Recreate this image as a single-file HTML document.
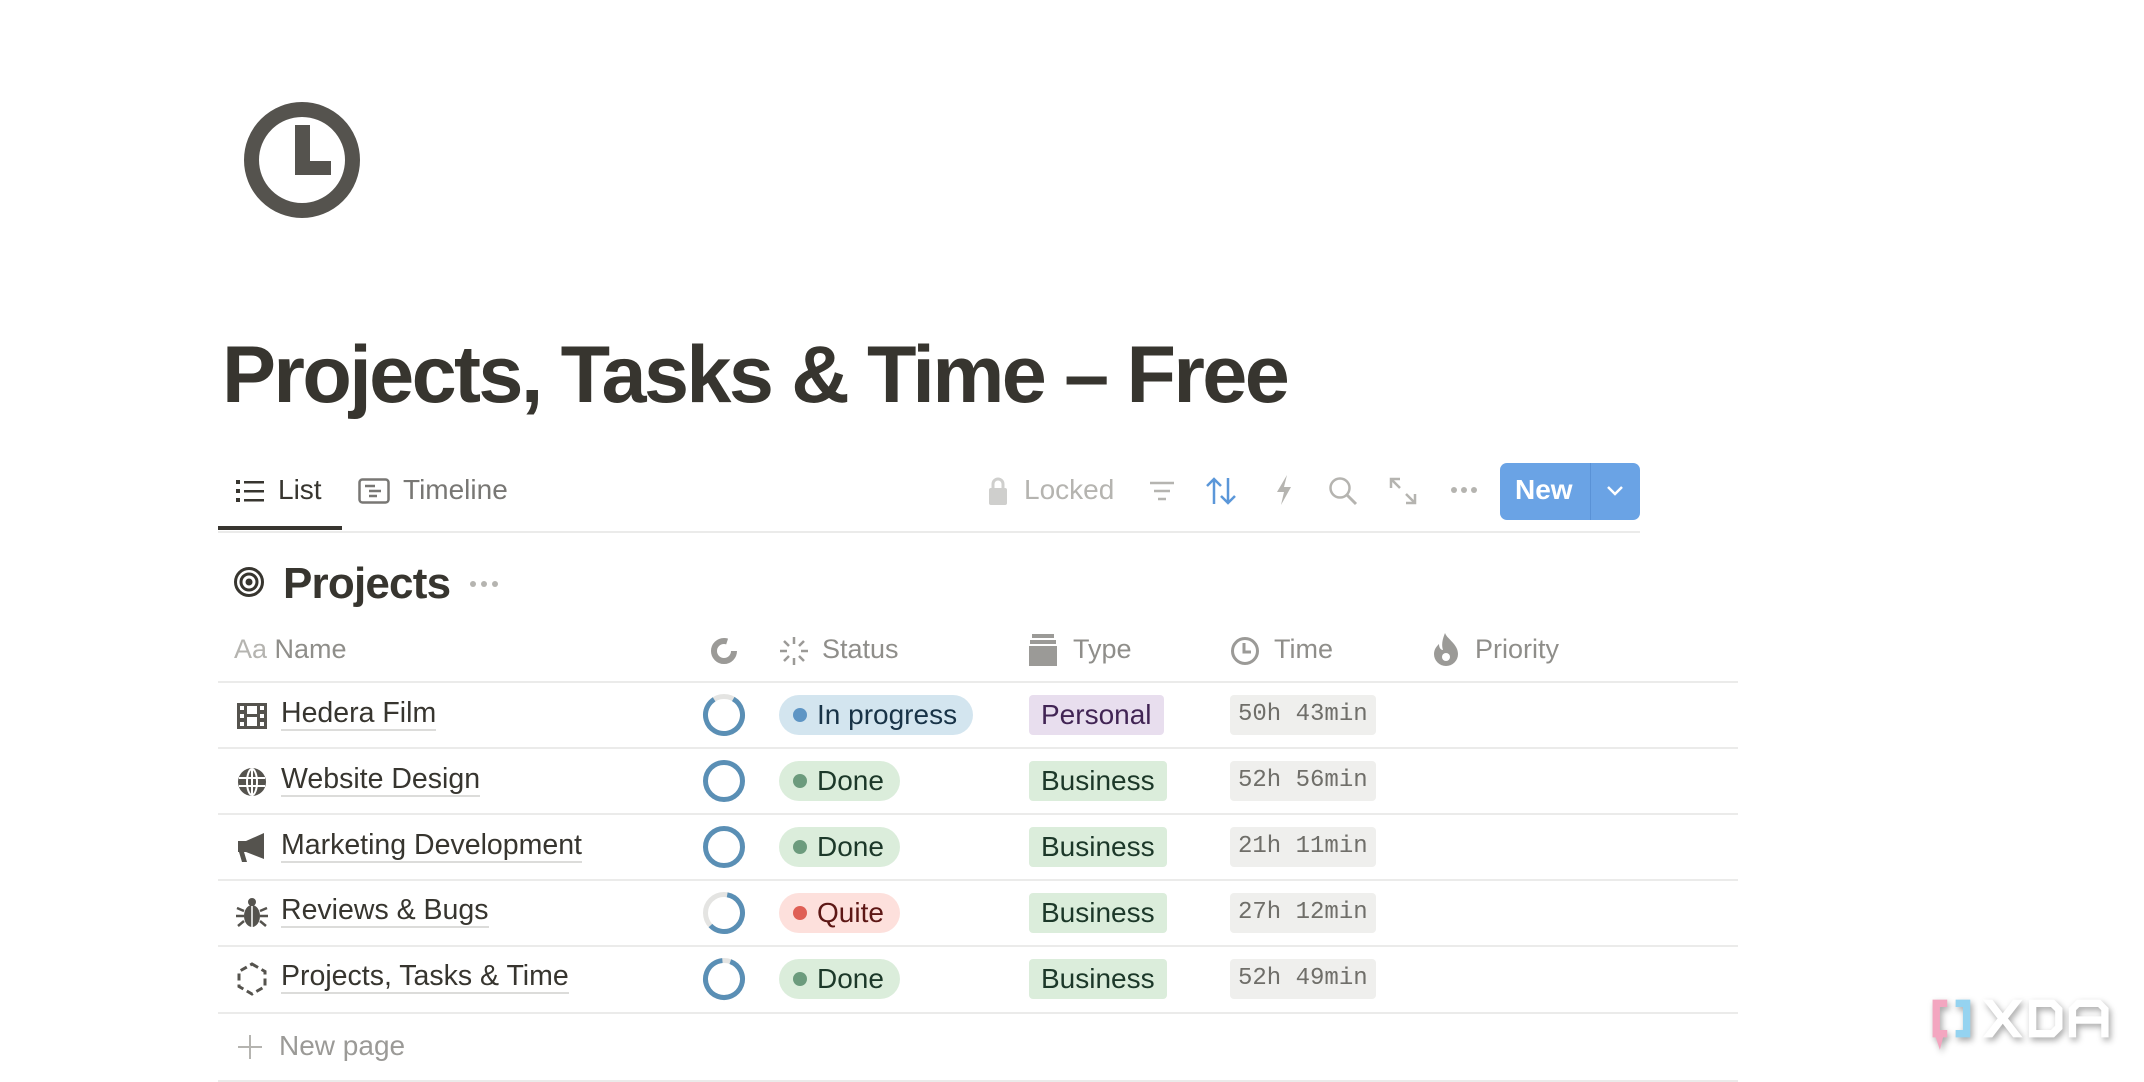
<!DOCTYPE html>
<html><head><meta charset="utf-8"><style>
*{margin:0;padding:0;box-sizing:border-box}
body{width:2144px;height:1082px;background:#fff;position:relative;overflow:hidden;font-family:"Liberation Sans",sans-serif;color:#37352f}
.a{position:absolute}
h1{position:absolute;left:222px;top:329px;font-size:81px;font-weight:700;letter-spacing:-2.6px;color:#37352f;white-space:nowrap}
.tab{font-size:28px;color:#787774;top:474px}
.row-line{position:absolute;left:218px;width:1520px;height:2px;background:#ebebea}
.hdr{font-size:27px;color:#8f8e8a;top:634px}
.name{position:absolute;left:281px;font-size:28.5px;color:#37352f;border-bottom:2px solid #dcdcda;line-height:32px}
.pill{position:absolute;height:40px;border-radius:20px;font-size:28px;line-height:40px;padding:0 16px 0 14px;white-space:nowrap}
.pill i{display:inline-block;width:14px;height:14px;border-radius:7px;margin-right:10px;vertical-align:2px}
.tag{position:absolute;left:1029px;height:40px;border-radius:4px;font-size:28px;line-height:40px;padding:0 12px;background:#dbeddb;color:#1c3829}
.time{position:absolute;left:1230px;height:40px;border-radius:4px;font-family:"Liberation Mono",monospace;font-size:24px;line-height:40px;padding:0 8px;background:#efefed;color:#6f6e69}
.ring{position:absolute;left:702px}
</style></head><body>

<svg class="a" style="left:243px;top:101px" width="120" height="120" viewBox="0 0 120 120">
<circle cx="59" cy="59" r="50.5" fill="none" stroke="#55534e" stroke-width="15"/>
<path d="M52 24h15v36h21v14H52z" fill="#55534e"/>
</svg>

<h1>Projects, Tasks &amp; Time – Free</h1>

<svg class="a" style="left:236px;top:478px" width="28" height="26" viewBox="0 0 28 26"><g fill="#37352f"><rect x="0" y="2" width="4" height="4"/><rect x="0" y="11" width="4" height="4"/><rect x="0" y="20" width="4" height="4"/><rect x="8" y="3" width="20" height="2.5"/><rect x="8" y="12" width="20" height="2.5"/><rect x="8" y="21" width="20" height="2.5"/></g></svg>
<div class="a tab" style="left:278px;color:#37352f">List</div>
<svg class="a" style="left:358px;top:478px" width="32" height="26" viewBox="0 0 32 26"><rect x="1.5" y="1.5" width="29" height="23" rx="3" fill="none" stroke="#787774" stroke-width="2.5"/><path d="M7 8h10M11 13h12M11 18h8" stroke="#787774" stroke-width="2.5"/></svg>
<div class="a tab" style="left:403px">Timeline</div>
<div class="a" style="left:218px;top:526px;width:124px;height:4px;background:#37352f"></div>
<div class="a" style="left:218px;top:531px;width:1422px;height:2px;background:#ebebea"></div>

<svg class="a" style="left:988px;top:476px" width="20" height="30" viewBox="0 0 20 30"><path d="M5 13V8a5 5 0 0 1 10 0v5" fill="none" stroke="#cfcfcd" stroke-width="3"/><rect x="1" y="12" width="18" height="17" rx="2" fill="#cfcfcd"/></svg>
<div class="a" style="left:1024px;top:474px;font-size:28px;color:#b5b4b0">Locked</div>
<svg class="a" style="left:1148px;top:480px" width="28" height="22" viewBox="0 0 28 22"><path d="M2 3h24M6 11h16M10 19h8" stroke="#b5b4b0" stroke-width="2.5"/></svg>
<svg class="a" style="left:1205px;top:476px" width="32" height="30" viewBox="0 0 32 30"><path d="M9 28V3M2 10l7-7 7 7M23 2v25M16 20l7 7 7-7" fill="none" stroke="#5b97d9" stroke-width="2.5"/></svg>
<svg class="a" style="left:1274px;top:474px" width="20" height="32" viewBox="0 0 20 32"><path d="M13 1L3 18h7l-3 13 10-18h-7z" fill="#b5b4b0"/></svg>
<svg class="a" style="left:1328px;top:476px" width="30" height="30" viewBox="0 0 30 30"><circle cx="12" cy="12" r="9.5" fill="none" stroke="#b5b4b0" stroke-width="2.5"/><path d="M19 19l9 9" stroke="#b5b4b0" stroke-width="3"/></svg>
<svg class="a" style="left:1388px;top:476px" width="30" height="30" viewBox="0 0 30 30"><path d="M3 12V3h9M3 3l9 9M27 18v9h-9M27 27l-9-9" fill="none" stroke="#b5b4b0" stroke-width="2.5"/></svg>
<svg class="a" style="left:1450px;top:486px" width="28" height="8" viewBox="0 0 28 8"><circle cx="4" cy="4" r="3" fill="#b5b4b0"/><circle cx="14" cy="4" r="3" fill="#b5b4b0"/><circle cx="24" cy="4" r="3" fill="#b5b4b0"/></svg>
<div class="a" style="left:1500px;top:463px;width:140px;height:57px;background:#6aa3e5;border-radius:7px"></div>
<div class="a" style="left:1590px;top:463px;width:1px;height:57px;background:#5a92d6"></div>
<div class="a" style="left:1515px;top:474px;font-size:28px;font-weight:700;color:#fff">New</div>
<svg class="a" style="left:1606px;top:485px" width="18" height="12" viewBox="0 0 18 12"><path d="M2 2l7 7 7-7" fill="none" stroke="#fff" stroke-width="2.5"/></svg>

<svg class="a" style="left:233px;top:566px" width="32" height="32" viewBox="0 0 32 32"><circle cx="16" cy="16" r="13.5" fill="none" stroke="#37352f" stroke-width="3"/><circle cx="16" cy="16" r="8" fill="none" stroke="#37352f" stroke-width="3"/><circle cx="16" cy="16" r="3.5" fill="#37352f"/></svg>
<div class="a" style="left:283px;top:559px;font-size:44px;font-weight:700;color:#37352f;letter-spacing:-0.8px">Projects</div>
<svg class="a" style="left:469px;top:580px" width="30" height="8" viewBox="0 0 30 8"><circle cx="4" cy="4" r="3" fill="#b5b4b0"/><circle cx="15" cy="4" r="3" fill="#b5b4b0"/><circle cx="26" cy="4" r="3" fill="#b5b4b0"/></svg>

<div class="a hdr" style="left:234px"><span style="color:#b5b4b0">Aa</span> Name</div>
<svg class="a" style="left:710px;top:637px" width="28" height="28" viewBox="0 0 28 28"><circle cx="14" cy="14" r="10" fill="none" stroke="#9b9a97" stroke-width="6" stroke-dasharray="50 13"/></svg>
<svg class="a" style="left:779px;top:636px" width="30" height="30" viewBox="0 0 30 30"><g stroke="#9b9a97" stroke-width="2.5"><path d="M15 1v7M15 22v7M1 15h7M22 15h7M5 5l5 5M20 20l5 5M25 5l-5 5M10 20l-5 5"/></g></svg>
<div class="a hdr" style="left:822px">Status</div>
<svg class="a" style="left:1029px;top:634px" width="28" height="32" viewBox="0 0 28 32"><rect x="3" y="0" width="22" height="4" fill="#9b9a97"/><rect x="1" y="6" width="26" height="4" fill="#9b9a97"/><rect x="0" y="12" width="28" height="20" fill="#9b9a97"/></svg>
<div class="a hdr" style="left:1073px">Type</div>
<svg class="a" style="left:1230px;top:636px" width="30" height="30" viewBox="0 0 30 30"><circle cx="15" cy="15" r="12.5" fill="none" stroke="#9b9a97" stroke-width="3"/><path d="M14 7v9h7" fill="none" stroke="#9b9a97" stroke-width="3"/></svg>
<div class="a hdr" style="left:1274px">Time</div>
<svg class="a" style="left:1431px;top:632px" width="30" height="34" viewBox="0 0 30 34"><path d="M14 1c2 6 13 11 13 21a12 12 0 0 1-24 0c0-5 3-8 5-10 0 4 2 6 4 6-2-6 0-12 2-17z" fill="#9b9a97"/><circle cx="15" cy="25" r="4" fill="#fff"/></svg>
<div class="a hdr" style="left:1475px">Priority</div>

<div class="row-line" style="top:681px"></div>
<div class="row-line" style="top:747px"></div>
<div class="row-line" style="top:813px"></div>
<div class="row-line" style="top:879px"></div>
<div class="row-line" style="top:945px"></div>
<div class="row-line" style="top:1012px"></div>
<div class="row-line" style="top:1080px"></div>

<svg class="a" style="left:237px;top:703px" width="30" height="26" viewBox="0 0 30 26"><rect width="30" height="26" fill="#55534e"/><g fill="#fff"><rect x="3" y="3" width="4" height="4"/><rect x="3" y="11" width="4" height="4"/><rect x="3" y="19" width="4" height="4"/><rect x="23" y="3" width="4" height="4"/><rect x="23" y="11" width="4" height="4"/><rect x="23" y="19" width="4" height="4"/><rect x="10" y="3" width="10" height="8"/><rect x="10" y="14" width="10" height="9"/></g></svg>
<div class="name" style="top:697px">Hedera Film</div>
<svg class="ring" style="top:693px" width="44" height="44" viewBox="0 0 44 44"><circle cx="22" cy="22" r="18.5" fill="none" stroke="#e4e4e2" stroke-width="5"/><circle cx="22" cy="22" r="18.5" fill="none" stroke="#5a8fb5" stroke-width="5" stroke-dasharray="96 200" transform="rotate(-60 22 22)"/></svg>
<div class="pill" style="left:779px;top:695px;background:#d3e5ef;color:#183347"><i style="background:#5e95c4"></i>In progress</div>
<div class="tag" style="top:695px;background:#e8deee;color:#412454">Personal</div>
<div class="time" style="top:695px">50h 43min</div>

<svg class="a" style="left:237px;top:767px" width="30" height="30" viewBox="0 0 30 30"><circle cx="15" cy="15" r="14" fill="#55534e"/><g fill="none" stroke="#fff" stroke-width="2"><ellipse cx="15" cy="15" rx="5" ry="13"/><path d="M2 11h26M2 19h26M15 2v26"/></g></svg>
<div class="name" style="top:763px">Website Design</div>
<svg class="ring" style="top:759px" width="44" height="44" viewBox="0 0 44 44"><circle cx="22" cy="22" r="18.5" fill="none" stroke="#5a8fb5" stroke-width="5"/></svg>
<div class="pill" style="left:779px;top:761px;background:#dbeddb;color:#1c3829"><i style="background:#6c9b7d"></i>Done</div>
<div class="tag" style="top:761px">Business</div>
<div class="time" style="top:761px">52h 56min</div>

<svg class="a" style="left:236px;top:832px" width="32" height="32" viewBox="0 0 32 32"><path d="M2 9h8l18-8v26L10 20h-2l3 10H6L3 20H2z" fill="#55534e"/></svg>
<div class="name" style="top:829px">Marketing Development</div>
<svg class="ring" style="top:825px" width="44" height="44" viewBox="0 0 44 44"><circle cx="22" cy="22" r="18.5" fill="none" stroke="#5a8fb5" stroke-width="5"/></svg>
<div class="pill" style="left:779px;top:827px;background:#dbeddb;color:#1c3829"><i style="background:#6c9b7d"></i>Done</div>
<div class="tag" style="top:827px">Business</div>
<div class="time" style="top:827px">21h 11min</div>

<svg class="a" style="left:236px;top:897px" width="32" height="32" viewBox="0 0 32 32"><g fill="#55534e"><ellipse cx="16" cy="5" rx="4" ry="4"/><ellipse cx="16" cy="19" rx="8" ry="11"/></g><g stroke="#55534e" stroke-width="2.5" fill="none"><path d="M1 11l7 3M31 11l-7 3M0 19h8M32 19h-8M2 29l6-5M30 29l-6-5"/></g><path d="M16 9v21" stroke="#fff" stroke-width="1.5"/></svg>
<div class="name" style="top:894px">Reviews &amp; Bugs</div>
<svg class="ring" style="top:891px" width="44" height="44" viewBox="0 0 44 44"><circle cx="22" cy="22" r="18.5" fill="none" stroke="#e4e4e2" stroke-width="5"/><circle cx="22" cy="22" r="18.5" fill="none" stroke="#5a8fb5" stroke-width="5" stroke-dasharray="70 200" transform="rotate(-80 22 22)"/></svg>
<div class="pill" style="left:779px;top:893px;background:#fde0dc;color:#5d1715"><i style="background:#df5f55"></i>Quite</div>
<div class="tag" style="top:893px">Business</div>
<div class="time" style="top:893px">27h 12min</div>

<svg class="a" style="left:237px;top:962px" width="30" height="34" viewBox="0 0 30 34"><path d="M15 2L28 9.5v15L15 32 2 24.5v-15z" fill="none" stroke="#55534e" stroke-width="3" stroke-dasharray="7 4"/></svg>
<div class="name" style="top:960px">Projects, Tasks &amp; Time</div>
<svg class="ring" style="top:957px" width="44" height="44" viewBox="0 0 44 44"><circle cx="22" cy="22" r="18.5" fill="none" stroke="#e4e4e2" stroke-width="5"/><circle cx="22" cy="22" r="18.5" fill="none" stroke="#5a8fb5" stroke-width="5" stroke-dasharray="108 200" transform="rotate(-70 22 22)"/></svg>
<div class="pill" style="left:779px;top:959px;background:#dbeddb;color:#1c3829"><i style="background:#6c9b7d"></i>Done</div>
<div class="tag" style="top:959px">Business</div>
<div class="time" style="top:959px">52h 49min</div>

<svg class="a" style="left:237px;top:1034px" width="26" height="26" viewBox="0 0 26 26"><path d="M13 1v24M1 13h24" stroke="#b5b4b0" stroke-width="2"/></svg>
<div class="a" style="left:279px;top:1030px;font-size:28px;color:#9b9a97">New page</div>

<svg class="a" style="left:1920px;top:992px" width="220" height="76" viewBox="0 0 210 70">
<g style="filter:drop-shadow(2px 3px 3px rgba(0,0,0,.35))">
<path d="M12 6h14v7h-7v22h7v7h-4l-3 12-4-12h-3z" fill="#f3a6c0"/>
<path d="M34 6h14v36H34v-7h7V13h-7z" fill="#95d3f0"/>
<path d="M60 6h9l10 13 10-13h9L84 24l14 18h-9L79 29 69 42h-9l14-18z" fill="#fff"/>
<path d="M104 6h24l8 8v20l-8 8h-24zM111 13v22h14l4-4V17l-4-4z" fill="#fff"/>
<path d="M142 42V14l8-8h22l8 8v28h-7V29h-24v13zM149 22h24v-6l-3-3h-18l-3 3z" fill="#fff"/>
</g>
</svg>
</body></html>
